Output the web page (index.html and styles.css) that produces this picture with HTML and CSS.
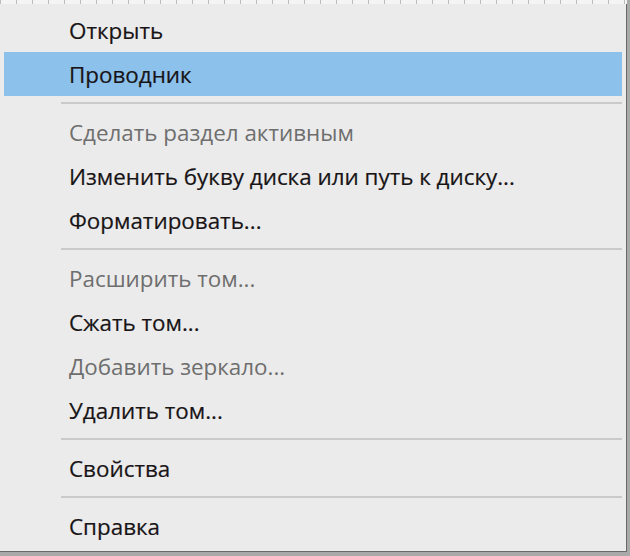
FILE: index.html
```html
<!DOCTYPE html>
<html lang="ru">
<head>
<meta charset="utf-8">
<link rel="stylesheet" href="styles.css">
</head>
<body>
<div class="strip"></div>
<div class="menu">
  <div class="item">Открыть</div>
  <div class="item active">Проводник</div>
  <div class="sep"></div>
  <div class="item disabled">Сделать раздел активным</div>
  <div class="item">Изменить букву диска или путь к диску...</div>
  <div class="item">Форматировать...</div>
  <div class="sep"></div>
  <div class="item disabled">Расширить том...</div>
  <div class="item">Сжать том...</div>
  <div class="item disabled">Добавить зеркало...</div>
  <div class="item">Удалить том...</div>
  <div class="sep"></div>
  <div class="item">Свойства</div>
  <div class="sep"></div>
  <div class="item">Справка</div>
</div>
</body>
</html>
```
FILE: styles.css
```css
html, body {
  margin: 0;
  padding: 0;
  background: #a9a9a9;
  width: 630px;
  height: 556px;
  overflow: hidden;
}
.strip {
  height: 4px;
  width: 627px;
  background: repeating-linear-gradient(90deg, #bdbdbd 0 1px, #f4f4f4 1px 16px);
}
.menu {
  width: 618px;
  height: 543px;
  padding: 4px 4px 0 4px;
  background: #ebebeb;
  border-right: 1px solid #6a6a6a;
  border-bottom: 1px solid #6a6a6a;
  font-family: "Open Sans", "Noto Sans", sans-serif;
  font-size: 22.4px;
  color: #181416;
  -webkit-text-stroke: 0.2px #181416;
}
.item {
  height: 44px;
  display: flex;
  align-items: center;
  padding-left: 65px;
}
.item.active {
  background: #8cc1ec;
}
.item.disabled {
  color: #6e6e6e;
  -webkit-text-stroke: 0;
}
.sep {
  height: 14px;
  display: flex;
  align-items: center;
  margin-left: 57px;
}
.sep::before {
  content: "";
  flex: 1;
  height: 2px;
  background: #cacaca;
}
```
